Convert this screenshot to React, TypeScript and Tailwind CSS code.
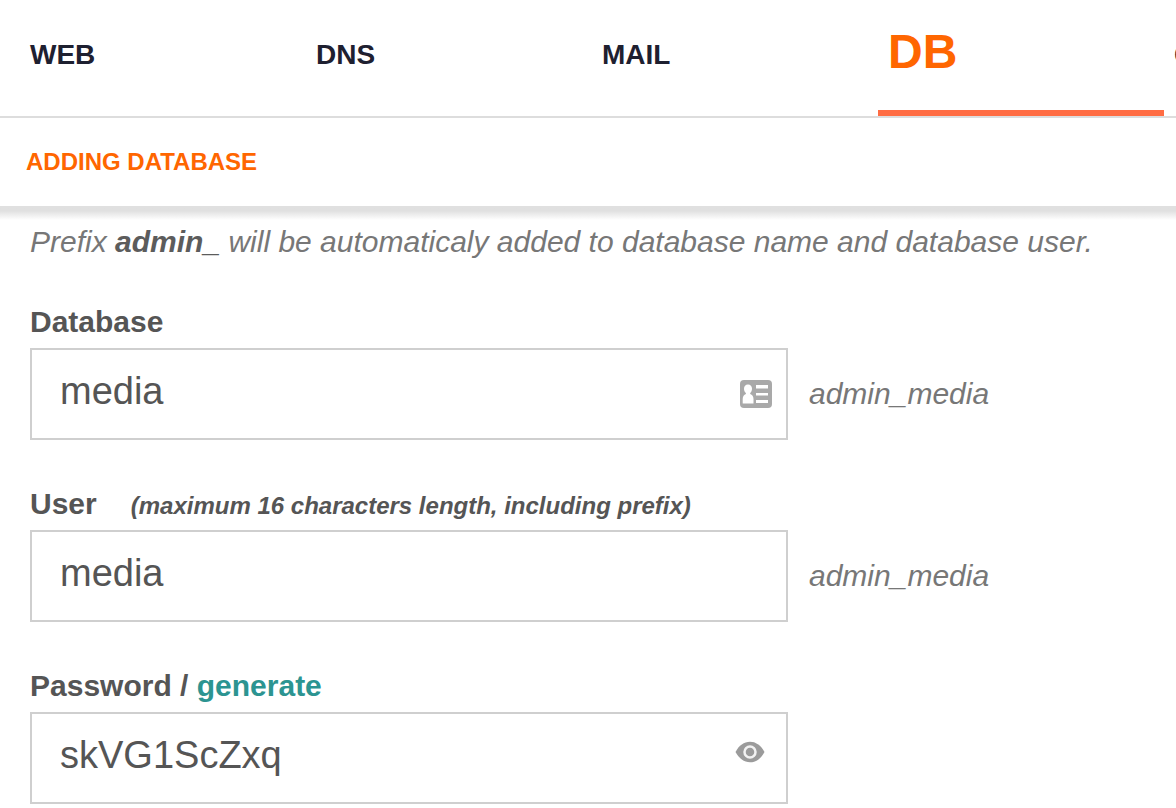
import React, { useState } from 'react';

const tabs = ['WEB', 'DNS', 'MAIL', 'DB', 'CRON'];

const inputClass =
  'block w-full h-[92px] border-2 border-[#cfcfcf] bg-white pl-7 pr-20 pb-[6px] text-[38px] text-[#555555] outline-none';

function CardIcon() {
  return (
    <svg viewBox="0 0 32 28" className="h-7 w-8" aria-hidden="true">
      <rect width="32" height="28" rx="4" fill="#a9a9a9" />
      <path
        d="M8 4.5c2.500 0 4 1.800 4 4.200 0 1.800-.7 3.300-1.800 4.200v1.200c2 .8 3.300 2.200 3.300 5V23.500H2.700v-4.400c0-2.800 1.300-4.200 3.200-5v-1.200C4.700 12 4 10.500 4 8.700c0-2.400 1.500-4.200 4-4.200z"
        fill="#fff"
      />
      <path d="M16 5h12v3.500H16zM16 13h12v2.500H16zM16 20h12v3H16z" fill="#fff" />
    </svg>
  );
}

function EyeIcon() {
  return (
    <svg viewBox="0 0 30 22" className="h-[22px] w-[30px]" aria-hidden="true">
      <path d="M.5 11C4 4.500 9 .8 15 .8S26 4.500 29.500 11C26 17.500 21 21.200 15 21.200S4 17.500.5 11z" fill="#9b9b9b" />
      <circle cx="15" cy="11" r="5.500" fill="none" stroke="#f2f2f2" strokeWidth="2.500" />
    </svg>
  );
}

export default function App() {
  const [database, setDatabase] = useState('media');
  const [user, setUser] = useState('media');
  const [password, setPassword] = useState('skVG1ScZxq');

  return (
    <div className="min-h-screen overflow-x-hidden bg-white font-['Liberation_Sans',Arial,sans-serif] text-[#555555]">
      <nav className="flex h-[118px] overflow-hidden border-b-2 border-[#dddddd] pl-5">
        {tabs.map((tab) => (
          <a
            key={tab}
            href="#"
            className={
              tab === 'DB'
                ? 'w-[286px] shrink-0 border-b-6 border-[#ff6c43] pt-5 pl-[10px] text-5xl leading-[64px] font-bold text-[#ff6600]'
                : 'w-[286px] shrink-0 pt-6 pl-[10px] text-[28px] leading-[62px] font-bold text-[#1e2030]'
            }
          >
            {tab}
          </a>
        ))}
      </nav>

      <header className="flex h-[88px] items-center pl-[26px]">
        <h1 className="text-2xl font-bold text-[#ff6600]">ADDING DATABASE</h1>
      </header>
      <div className="h-[14px] bg-linear-to-b from-[#e0e0e0] from-35% to-white" />

      <form className="px-[30px]" onSubmit={(e) => e.preventDefault()}>
        <p className="mt-[2px] text-[30px] leading-10 text-[#777777] italic">
          Prefix <b className="text-[#5c5c5c]">admin_</b> will be automaticaly added to database name
          and database user.
        </p>

        <div className="mt-10">
          <label htmlFor="database" className="block h-[46px] text-[30px] leading-10 font-bold">
            Database
          </label>
          <div className="flex items-center gap-[21px]">
            <div className="relative w-full max-w-[758px]">
              <input
                id="database"
                className={inputClass}
                value={database}
                onChange={(e) => setDatabase(e.target.value)}
              />
              <span className="absolute top-8 right-4">
                <CardIcon />
              </span>
            </div>
            <span className="pb-[2px] text-[30px] text-[#777777] italic">admin_{database}</span>
          </div>
        </div>

        <div className="mt-11">
          <label htmlFor="user" className="block h-[46px] text-[30px] leading-10 font-bold">
            User
            <span className="ml-[34px] text-2xl italic">
              (maximum 16 characters length, including prefix)
            </span>
          </label>
          <div className="flex items-center gap-[21px]">
            <div className="w-full max-w-[758px]">
              <input
                id="user"
                className={inputClass}
                value={user}
                onChange={(e) => setUser(e.target.value)}
              />
            </div>
            <span className="pb-[2px] text-[30px] text-[#777777] italic">admin_{user}</span>
          </div>
        </div>

        <div className="mt-11">
          <div className="h-[46px] text-[30px] leading-10 font-bold">
            <label htmlFor="password">Password</label> /{' '}
            <button type="button" className="text-[#2c9491]">
              generate
            </button>
          </div>
          <div className="relative w-full max-w-[758px]">
            <input
              id="password"
              className={inputClass}
              value={password}
              onChange={(e) => setPassword(e.target.value)}
            />
            <button
              type="button"
              aria-label="Toggle password"
              className="absolute top-[29px] right-[23px]"
            >
              <EyeIcon />
            </button>
          </div>
        </div>
      </form>
    </div>
  );
}
